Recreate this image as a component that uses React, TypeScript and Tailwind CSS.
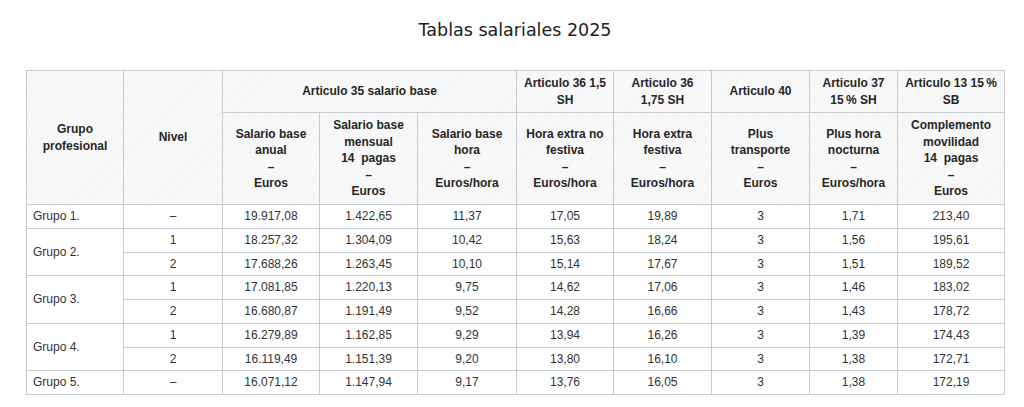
import React from "react";

type Row = {
  grupo?: string;
  span?: number;
  nivel: string;
  valores: string[];
};

const rows: Row[] = [
  { grupo: "Grupo 1.", span: 1, nivel: "–", valores: ["19.917,08", "1.422,65", "11,37", "17,05", "19,89", "3", "1,71", "213,40"] },
  { grupo: "Grupo 2.", span: 2, nivel: "1", valores: ["18.257,32", "1.304,09", "10,42", "15,63", "18,24", "3", "1,56", "195,61"] },
  { nivel: "2", valores: ["17.688,26", "1.263,45", "10,10", "15,14", "17,67", "3", "1,51", "189,52"] },
  { grupo: "Grupo 3.", span: 2, nivel: "1", valores: ["17.081,85", "1.220,13", "9,75", "14,62", "17,06", "3", "1,46", "183,02"] },
  { nivel: "2", valores: ["16.680,87", "1.191,49", "9,52", "14,28", "16,66", "3", "1,43", "178,72"] },
  { grupo: "Grupo 4.", span: 2, nivel: "1", valores: ["16.279,89", "1.162,85", "9,29", "13,94", "16,26", "3", "1,39", "174,43"] },
  { nivel: "2", valores: ["16.119,49", "1.151,39", "9,20", "13,80", "16,10", "3", "1,38", "172,71"] },
  { grupo: "Grupo 5.", span: 1, nivel: "–", valores: ["16.071,12", "1.147,94", "9,17", "13,76", "16,05", "3", "1,38", "172,19"] },
];

// Cabeceras de la segunda fila (una línea por elemento)
const subHeaders: string[][] = [
  ["Salario base", "anual", "–", "Euros"],
  ["Salario base", "mensual", "14\u00a0 pagas", "–", "Euros"],
  ["Salario base", "hora", "–", "Euros/hora"],
  ["Hora extra no", "festiva", "–", "Euros/hora"],
  ["Hora extra", "festiva", "–", "Euros/hora"],
  ["Plus", "transporte", "–", "Euros"],
  ["Plus hora", "nocturna", "–", "Euros/hora"],
  ["Complemento", "movilidad", "14\u00a0 pagas", "–", "Euros"],
];

const hatch =
  "bg-[image:repeating-linear-gradient(135deg,#f1f2f3_0px,#f1f2f3_1px,#fafafa_1px,#fafafa_3px)]";

const th = `border border-[#c6cad1] ${hatch} px-[4px] align-middle text-center font-bold text-[#262626]`;
const td = "border border-[#c6cad1] bg-white px-[6px] align-middle text-[#333333]";

function Lines({ lines }: { lines: string[] }) {
  return (
    <>
      {lines.map((line, i) => (
        <React.Fragment key={i}>
          {i > 0 && <br />}
          {line}
        </React.Fragment>
      ))}
    </>
  );
}

export default function App() {
  return (
    <div className="w-[1024px] h-[407px] bg-white pl-[26px] pt-[19px] overflow-hidden">
      <h1 className="w-[978px] text-center text-[17.5px] leading-[22px] text-[#222222] font-['DejaVu_Sans',sans-serif]">
        Tablas salariales 2025
      </h1>

      <table className="mt-[29px] w-[978px] table-fixed border-collapse text-[12px] leading-[16.5px] font-['Liberation_Sans',Arial,sans-serif]">
        <colgroup>
          <col className="w-[97px]" />
          <col className="w-[99px]" />
          <col className="w-[97px]" />
          <col className="w-[98px]" />
          <col className="w-[99px]" />
          <col className="w-[97px]" />
          <col className="w-[98px]" />
          <col className="w-[98px]" />
          <col className="w-[88px]" />
          <col className="w-[107px]" />
        </colgroup>
        <thead>
          <tr className="h-[42px]">
            <th rowSpan={2} className={th}>
              <Lines lines={["Grupo", "profesional"]} />
            </th>
            <th rowSpan={2} className={th}>Nivel</th>
            <th colSpan={3} className={th}>Articulo 35 salario base</th>
            <th className={th}>
              <Lines lines={["Articulo 36 1,5", "SH"]} />
            </th>
            <th className={th}>
              <Lines lines={["Articulo 36", "1,75 SH"]} />
            </th>
            <th className={th}>Articulo 40</th>
            <th className={th}>
              <Lines lines={["Articulo 37", "15\u202f% SH"]} />
            </th>
            <th className={th}>
              <Lines lines={["Articulo 13 15\u202f%", "SB"]} />
            </th>
          </tr>
          <tr className="h-[92px]">
            {subHeaders.map((lines, i) => (
              <th key={i} className={th}>
                <Lines lines={lines} />
              </th>
            ))}
          </tr>
        </thead>
        <tbody>
          {rows.map((row, i) => (
            <tr key={i} className="h-[23.75px]">
              {row.grupo && (
                <td rowSpan={row.span} className={`${td} text-left`}>
                  {row.grupo}
                </td>
              )}
              <td className={`${td} text-center`}>{row.nivel}</td>
              {row.valores.map((v, j) => (
                <td key={j} className={`${td} text-center`}>
                  {v}
                </td>
              ))}
            </tr>
          ))}
        </tbody>
      </table>
    </div>
  );
}
